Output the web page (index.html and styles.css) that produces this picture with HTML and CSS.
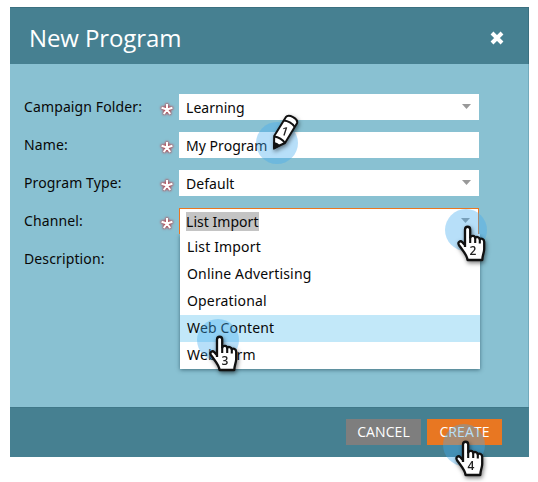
FILE: index.html
```html
<!DOCTYPE html>
<html lang="en">
<head>
<meta charset="utf-8">
<title>New Program</title>
<link rel="stylesheet" href="styles.css">
</head>
<body>
<svg class="defs" width="0" height="0">
  <symbol id="star" viewBox="0 0 16 16"><path d="M8 8.5V3M8 8.5L2.6 6.8M8 8.5L13.4 6.8M8 8.5L4.8 13M8 8.5L11.2 13"/></symbol>
  <symbol id="hand" viewBox="0 0 30 38">
    <path d="M9 22V4.5C9 .8 14.2.8 14.2 4.5V12.5C15 10.2 19 10.4 19.2 13C20 11.2 23.6 11.8 23.8 14.3C25.4 13 28.2 14 28.2 16.8V24C28.2 28 26.3 30 26.3 35H11.5C11.5 30.5 6.3 25 3.2 20.5C1 17.2 4.3 15 6.4 17.3L9 20.3" fill="#fff" stroke="#111" stroke-width="2.3" stroke-linejoin="round"/>
    <path d="M14.2 12V18M19.2 13V18M23.8 14V18.5" fill="none" stroke="#111" stroke-width="2.1"/>
  </symbol>
</svg>
<main class="dialog">
  <header class="header">
    <h1>New Program</h1>
    <svg class="close" viewBox="0 0 16 16"><path d="M3 3L13 13M13 3L3 13"/></svg>
  </header>
  <form class="form">
    <div class="row"><label>Campaign Folder:</label><svg class="star"><use href="#star"/></svg><div class="field"><span>Learning</span><i class="arrow"></i></div></div>
    <div class="row"><label>Name:</label><svg class="star"><use href="#star"/></svg><div class="field"><span>My Program</span></div></div>
    <div class="row"><label>Program Type:</label><svg class="star"><use href="#star"/></svg><div class="field"><span>Default</span><i class="arrow"></i></div></div>
    <div class="row"><label>Channel:</label><svg class="star"><use href="#star"/></svg>
      <div class="field open"><span class="selected">List Import</span><i class="arrow"></i>
        <ul class="menu"><li>List Import</li><li>Online Advertising</li><li>Operational</li><li class="active">Web Content</li><li>Web Form</li></ul>
      </div>
    </div>
    <div class="row"><label>Description:</label></div>
  </form>
  <footer class="footer"><button class="cancel">CANCEL</button><button class="create">CREATE</button></footer>
</main>
<div class="marker m1"><svg class="pencil" viewBox="0 0 34 42">
  <path d="M5 35L5.2 23L16.8 4.2C19.6 .6 29.6 5.6 28 10.2L16 30Z" fill="#fff" stroke="#111" stroke-width="2" stroke-linejoin="round"/>
  <path d="M14.8 7.6Q21.4 8.2 25.8 14M5.2 23.4Q12 24.2 16 30" fill="none" stroke="#111" stroke-width="2"/>
  <path d="M4.4 37L4.6 29Q9 29.5 11.4 33Z" fill="#111"/>
  <text x="12.5" y="22.5" transform="rotate(18 15.5 18)">1</text>
</svg></div>
<div class="marker m2"><svg class="hand" viewBox="0 0 30 38"><use href="#hand"/><text x="13.5" y="30">2</text></svg></div>
<div class="marker m3"><svg class="hand" viewBox="0 0 30 38"><use href="#hand"/><text x="13.5" y="30">3</text></svg></div>
<div class="marker m4"><svg class="hand" viewBox="0 0 30 38"><use href="#hand"/><text x="13.5" y="30">4</text></svg></div>
</body>
</html>
```
FILE: styles.css
```css
* { box-sizing: border-box; }
body {
  margin: 0;
  padding: 7px 9px 0 10px;
  height: 482px;
  overflow: hidden;
  position: relative;
  background: #fff;
  color: #080808;
  font: 14px/20px "Noto Sans", "Open Sans", sans-serif;
}
.defs { position: absolute; }
.dialog {
  display: flex;
  flex-direction: column;
  height: 450px;
  background: #89c1d2;
  border-right: 1px solid #72aabc;
}
.header {
  display: flex;
  align-items: center;
  justify-content: space-between;
  height: 57px;
  padding: 3px 23px 0 19px;
  margin-right: -1px;
  background: #468091;
  border-top: 1px solid #3b7080;
  border-right: 1px solid #3b7080;
}
h1 {
  margin: 0;
  color: #fff;
  font: 400 24px/34px "Open Sans", sans-serif;
  letter-spacing: -.1px;
}
.close { width: 16px; height: 16px; stroke: #fff; stroke-width: 4; fill: none; }
.form { flex: 1; padding: 30px 0 0 14px; }
.row { display: flex; height: 38px; }
label { width: 135px; padding-top: 3px; letter-spacing: .12px; }
.star {
  width: 16px;
  height: 16px;
  margin: 7px 4px 0 0;
  stroke: #fff;
  stroke-width: 2.1;
  fill: none;
  filter: drop-shadow(0 0 1.2px #b43a43) drop-shadow(0 0 1px #b4505a);
}
.field {
  position: relative;
  display: flex;
  justify-content: space-between;
  width: 300px;
  height: 26px;
  padding: 4px 7px;
  background: #fff;
  letter-spacing: .04px;
}
.arrow {
  width: 9px;
  height: 5px;
  margin: 6px 1px 0 0;
  background: #999;
  clip-path: polygon(0 0, 100% 0, 50% 100%);
}
.open { border: 1px solid #e87722; border-bottom: 0; padding: 3px 7px 3px 6px; }
.selected { height: 19px; line-height: 20px; background: #c4c4c4; }
.menu {
  position: absolute;
  left: 0;
  top: 25px;
  width: 300px;
  margin: 0;
  padding: 0;
  list-style: none;
  background: #fff;
  box-shadow: 0 1px 4px rgba(30, 70, 85, .65);
  clip-path: inset(0 -6px -6px -6px);
  letter-spacing: .16px;
}
.menu li { height: 27px; padding: 3px 7px; }
.menu .active { background: #c2e8f9; }
.footer {
  display: flex;
  justify-content: flex-end;
  gap: 6px;
  height: 50px;
  padding: 11px 27px 0 0;
  margin-right: -1px;
  background: #468091;
  border-top: 1px solid #3f7889;
}
.footer button {
  width: 75px;
  height: 26px;
  padding: 0;
  border: 0;
  color: #fff;
  font: 14px/26px "Open Sans", sans-serif;
  letter-spacing: .1px;
}
.footer .cancel { background: #7e7e7e; }
.footer .create { background: #e87722; }
.marker {
  position: absolute;
  width: 42px;
  height: 42px;
  border-radius: 50%;
  background: rgba(65, 171, 240, .38);
}
.m1 { left: 256px; top: 122px; }
.m2 { left: 445px; top: 209px; }
.m3 { left: 197px; top: 319px; }
.m4 { left: 443px; top: 424px; }
.hand, .pencil {
  position: absolute;
  overflow: visible;
  filter: drop-shadow(1px 2px 2px rgba(0, 0, 0, .5));
}
.hand { left: 11px; top: 16px; width: 30px; height: 38px; }
.pencil { left: 13px; top: -9px; width: 34px; height: 42px; }
.marker text { font: 600 12px "Open Sans", sans-serif; fill: #222; }
```
